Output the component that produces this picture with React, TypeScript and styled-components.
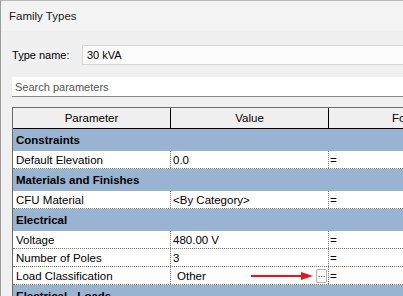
import * as React from 'react';
import styled, { createGlobalStyle } from 'styled-components';

const COL = 158;

const GlobalStyle = createGlobalStyle`
  html, body {
    margin: 0;
    padding: 0;
    background: #f0f0f0;
    overflow: hidden;
  }
`;

const Window = styled.div`
  width: 403px;
  height: 296px;
  box-sizing: border-box;
  border-top: 1px solid #b9b9b9;
  border-left: 1px solid #9c9c9c;
  background: #f0f0f0;
  overflow: hidden;
  font-family: 'Liberation Sans', Arial, sans-serif;
  color: #000;
`;

const TitleBar = styled.div`
  height: 30px;
  display: flex;
  align-items: center;
  padding-left: 8px;
  background: #f3f3f3;
  font-size: 11.5px;
  color: #1a1a1a;
`;

const Body = styled.div`
  padding: 13px 0 0 11px;
  display: flex;
  flex-direction: column;
`;

const TypeRow = styled.div`
  display: flex;
  align-items: center;
  height: 20px;
  margin-top: 1px;
  font-size: 11px;
`;

const Label = styled.span`
  width: 70px;
  u {
    text-decoration: underline;
    text-underline-offset: 1px;
  }
`;

const TypeInput = styled.div`
  flex: 1;
  height: 20px;
  box-sizing: border-box;
  border-top: 1px solid #d4d4d4;
  border-bottom: 1px solid #d4d4d4;
  border-left: 1px solid #d4d4d4;
  background: #fcfcfc;
  display: flex;
  align-items: center;
  padding-left: 4px;
`;

const Search = styled.div`
  margin-top: 12px;
  height: 20px;
  box-sizing: border-box;
  background: #ffffff;
  border-bottom: 1px solid #8a8a8a;
  display: flex;
  align-items: center;
  padding-left: 3px;
  font-size: 11px;
  color: #555555;
`;

const Table = styled.div`
  margin-top: 10px;
  width: 520px;
  border-top: 1px solid #6b6b6b;
  border-left: 1px solid #6b6b6b;
  font-size: 11.5px;
`;

const Row = styled.div`
  display: grid;
  grid-template-columns: ${COL}px ${COL}px 1fr;
`;

const HeaderRow = styled(Row)`
  height: 20px;
  background: #f0f0f0;
  border-bottom: 1px solid #000;
`;

const HeaderCell = styled.div`
  display: flex;
  align-items: center;
  justify-content: center;
  &:not(:last-child) {
    border-right: 1px solid #000;
  }
  &:last-child {
    justify-content: flex-start;
    padding-left: 63px;
  }
`;

const GroupRow = styled.div`
  height: 22px;
  display: flex;
  align-items: center;
  padding-left: 3px;
  background: #99b4d1;
  font-weight: bold;
`;

const DataRow = styled(Row)`
  height: 18px;
  background: #fff;
  border-bottom: 1px dotted #7a7a7a;
  box-sizing: border-box;
`;

const Cell = styled.div<{ $indent?: number }>`
  display: flex;
  align-items: center;
  padding-left: ${({ $indent }) => $indent ?? 3}px;
  padding-right: 1px;
  white-space: nowrap;
  &:not(:last-child) {
    border-right: 1px dotted #7a7a7a;
  }
`;

const Arrow = styled.svg`
  margin-left: auto;
  margin-right: 3px;
`;

const DotsButton = styled.span`
  width: 9px;
  height: 12px;
  border: 1px solid #b3b3b3;
  border-radius: 2px;
  background: #fafafa;
  font-size: 9px;
  line-height: 8px;
  display: flex;
  justify-content: center;
  color: #222;
`;

type Param = { name: string; value: string; special?: boolean };
type Group = { title: string; params: Param[] };

const groups: Group[] = [
  { title: 'Constraints', params: [{ name: 'Default Elevation', value: '0.0' }] },
  {
    title: 'Materials and Finishes',
    params: [{ name: 'CFU Material', value: '<By Category>' }],
  },
  {
    title: 'Electrical',
    params: [
      { name: 'Voltage', value: '480.00 V' },
      { name: 'Number of Poles', value: '3' },
      { name: 'Load Classification', value: 'Other', special: true },
    ],
  },
  { title: 'Electrical - Loads', params: [] },
];

function ParamRow({ param }: { param: Param }) {
  return (
    <DataRow>
      <Cell>{param.name}</Cell>
      {param.special ? (
        <Cell $indent={6}>
          {param.value}
          <Arrow width="62" height="10" viewBox="0 0 62 10">
            <line x1="0" y1="5" x2="52" y2="5" stroke="#e8141b" strokeWidth="2" />
            <polygon points="50,1 62,5 50,9" fill="#e8141b" />
          </Arrow>
          <DotsButton>...</DotsButton>
        </Cell>
      ) : (
        <Cell $indent={2}>{param.value}</Cell>
      )}
      <Cell $indent={1}>=</Cell>
    </DataRow>
  );
}

function App() {
  return (
    <Window>
      <GlobalStyle />
      <TitleBar>Family Types</TitleBar>
      <Body>
        <TypeRow>
          <Label>
            T<u>y</u>pe name:
          </Label>
          <TypeInput>30 kVA</TypeInput>
        </TypeRow>
        <Search>Search parameters</Search>
        <Table>
          <HeaderRow>
            <HeaderCell>Parameter</HeaderCell>
            <HeaderCell>Value</HeaderCell>
            <HeaderCell>Formula</HeaderCell>
          </HeaderRow>
          {groups.map((group) => (
            <React.Fragment key={group.title}>
              <GroupRow>{group.title}</GroupRow>
              {group.params.map((param) => (
                <ParamRow key={param.name} param={param} />
              ))}
            </React.Fragment>
          ))}
        </Table>
      </Body>
    </Window>
  );
}

export default App;
